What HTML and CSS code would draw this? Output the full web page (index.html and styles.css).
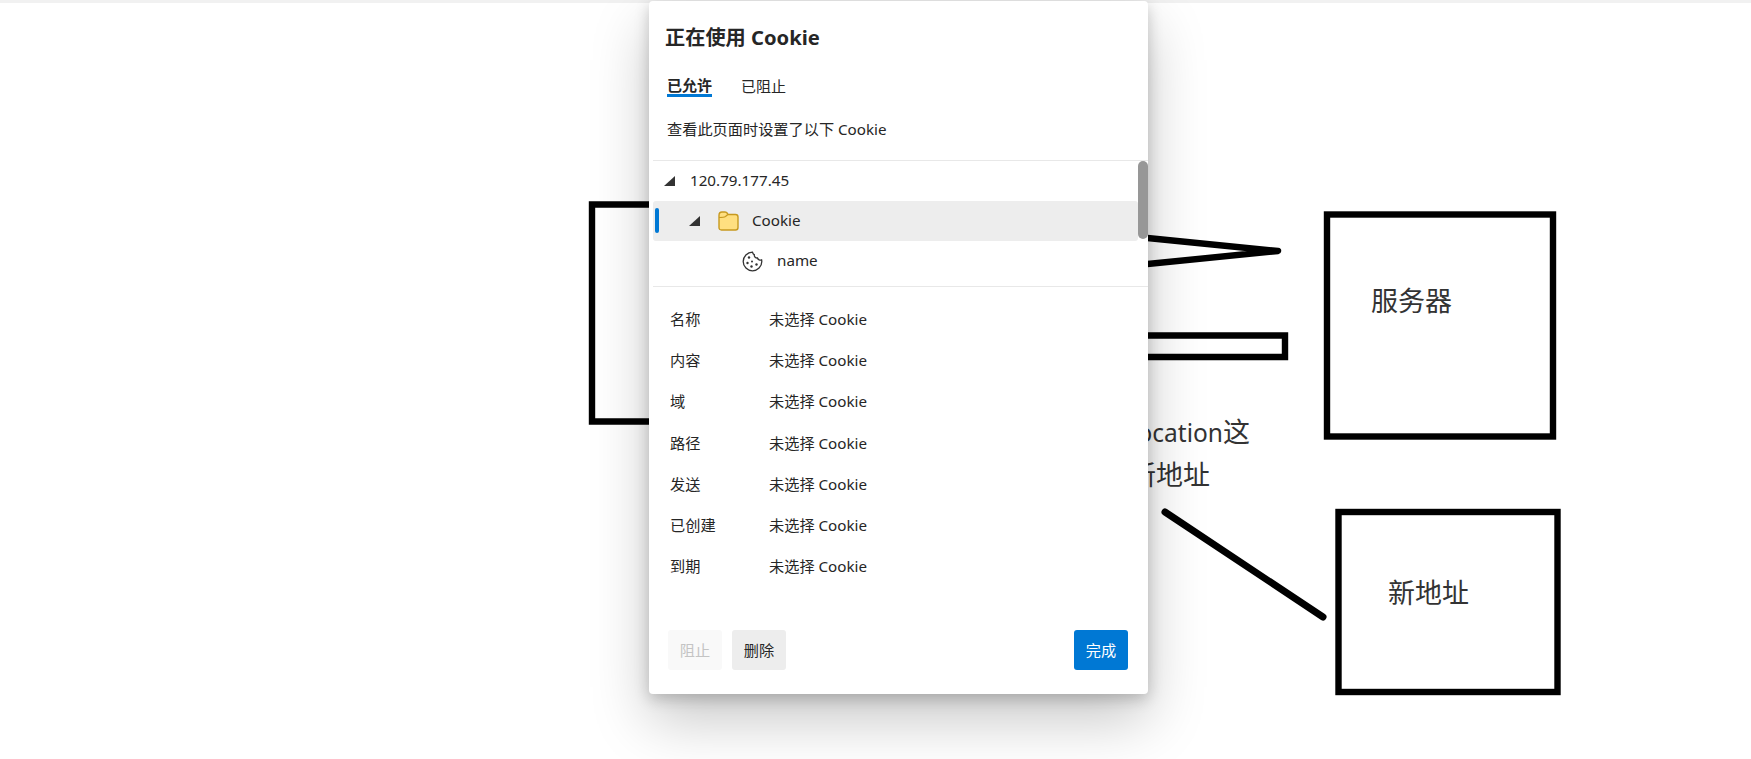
FILE: index.html
```html
<!DOCTYPE html>
<html lang="zh-CN">
<head>
<meta charset="utf-8">
<title>正在使用 Cookie</title>
<link rel="stylesheet" href="styles.css">
</head>
<body>
<div class="topbar"></div>
<svg class="drawing" width="1751" height="759" viewBox="0 0 1751 759">
  <g class="strokes">
    <path d="M880 204.500H592V421.500H880"/>
    <path class="taper" d="M1120 235.200L1278 251L1120 266.800"/>
    <path d="M1000 335.500H1285V357H1000"/>
    <rect x="1327" y="214.500" width="226" height="222"/>
    <rect x="1338.500" y="512" width="219" height="180"/>
    <path class="round" d="M1165 512L1323 617"/>
  </g>
  <g class="words">
    <text x="1371" y="311">服务器</text>
    <text x="1388" y="603">新地址</text>
    <text x="1250" y="442" text-anchor="end"><tspan class="latin">Location</tspan>这</text>
    <text x="1210" y="485" text-anchor="end">告诉新地址</text>
  </g>
</svg>
<section class="dialog">
  <h1 class="title">正在使用 Cookie</h1>
  <div class="tabs">
    <span class="tab active">已允许</span>
    <span class="tab">已阻止</span>
  </div>
  <p class="desc">查看此页面时设置了以下 Cookie</p>
  <div class="tree">
    <div class="row">
      <svg class="arrow" width="11" height="11" viewBox="0 0 11 11"><path d="M11 0V10H0Z"/></svg>
      <span class="host">120.79.177.45</span>
    </div>
    <div class="row selected">
      <svg class="arrow" width="11" height="11" viewBox="0 0 11 11"><path d="M11 0V10H0Z"/></svg>
      <svg class="folder" width="21" height="20" viewBox="0 0 21 20"><path class="folder-body" d="M1 4.500Q1 1 4 1H7Q8.500 1 9.500 2.500L10 3.500H17.500Q20 3.500 20 6V16.500Q20 19 17.500 19H3.500Q1 19 1 16.500Z"/><path class="folder-tab" d="M1 6.500Q6 6.500 7.500 5.500L9.800 3.500"/></svg>
      <span class="folder-label">Cookie</span>
    </div>
    <div class="row">
      <svg class="cookie" width="21" height="21" viewBox="0 0 21 21">
        <path class="cookie-line" d="M10.500 1.200C5.300 1.200 1.200 5.400 1.200 10.500S5.400 19.800 10.500 19.800 19.800 15.600 19.800 10.500C19.800 9.900 19.700 9.300 19.600 8.800 18 9.500 16 8.800 15.500 7 13.700 7.200 12 5.700 12.300 3.700 11.300 3.400 10.900 2.500 10.500 1.200Z"/>
        <circle cx="7" cy="6.500" r="1.200"/><circle cx="5.500" cy="12" r="1.200"/><circle cx="10" cy="10.500" r="1"/><circle cx="9.500" cy="15.500" r="1.200"/><circle cx="14.500" cy="13.500" r="1.200"/>
      </svg>
      <span class="cookie-label">name</span>
    </div>
    <div class="scroll-thumb"></div>
  </div>
  <dl class="details">
    <dt>名称</dt><dd>未选择 Cookie</dd>
    <dt>内容</dt><dd>未选择 Cookie</dd>
    <dt>域</dt><dd>未选择 Cookie</dd>
    <dt>路径</dt><dd>未选择 Cookie</dd>
    <dt>发送</dt><dd>未选择 Cookie</dd>
    <dt>已创建</dt><dd>未选择 Cookie</dd>
    <dt>到期</dt><dd>未选择 Cookie</dd>
  </dl>
  <div class="actions">
    <button class="btn disabled" type="button">阻止</button>
    <button class="btn" type="button">删除</button>
    <button class="btn primary" type="button">完成</button>
  </div>
</section>
</body>
</html>
```
FILE: styles.css
```css
* { box-sizing: border-box; }
html, body { margin: 0; height: 100%; }
body {
  position: relative;
  width: 1751px;
  height: 759px;
  overflow: hidden;
  background: #fff;
  color: #262626;
  font-family: "Noto Sans", "Noto Sans CJK SC", sans-serif;
  font-size: 15.200px;
}
.topbar { height: 3px; background: #f1f1f1; }
.drawing { position: absolute; left: 0; top: 0; }
.strokes { fill: none; stroke: #000; stroke-width: 6.400; stroke-linejoin: miter; }
.taper { stroke-width: 6.500; stroke-linejoin: round; stroke-linecap: round; }
.round { stroke-width: 7; stroke-linecap: round; }
.words { fill: #333; font-family: "Noto Sans", "Noto Sans CJK SC", sans-serif; font-size: 27px; }
.latin { font-size: 24.500px; }

.dialog {
  position: absolute;
  left: 649px;
  top: 1px;
  width: 499px;
  height: 693px;
  display: flex;
  flex-direction: column;
  background: #fff;
  border-radius: 4px;
  box-shadow: 0 26px 58px rgba(0,0,0,.22), 0 5px 15px rgba(0,0,0,.2);
}
.title {
  margin: 21px 0 0 16px;
  height: 30px;
  font-size: 20.200px;
  line-height: 30px;
  font-weight: 700;
}
.tabs { display: flex; gap: 29px; margin: 21px 0 0 18px; font-size: 15px; }
.tab { height: 24px; line-height: 26px; }
.tab.active { line-height: 24px; font-weight: 700; border-bottom: 3px solid #0078d4; }
.desc { margin: 20px 0 0 18px; height: 24px; line-height: 24px; }
.tree {
  position: relative;
  margin: 19px 0 0 4px;
  padding-bottom: 5px;
  border-top: 1px solid #e8e8e8;
  border-bottom: 1px solid #e8e8e8;
}
.row {
  position: relative;
  display: flex;
  align-items: center;
  height: 40px;
  margin-right: 10px;
  padding-left: 11px;
}
.row span { padding-bottom: 2px; }
.arrow { fill: #333; flex: none; }
.host { margin-left: 15px; }
.selected { background: #ededed; border-radius: 3px; padding-left: 36px; }
.selected::before {
  content: "";
  position: absolute;
  left: 2px;
  top: 7px;
  width: 4px;
  height: 25px;
  border-radius: 2px;
  background: #0078d4;
}
.folder { margin-left: 18px; flex: none; }
.folder-body { fill: #ffdf80; stroke: #c7991f; stroke-width: 1.400; }
.folder-tab { fill: none; stroke: #c7991f; stroke-width: 1.200; }
.folder-label { margin-left: 13px; }
.cookie { margin-left: 78px; flex: none; fill: #333; }
.cookie-line { fill: none; stroke: #333; stroke-width: 1.300; }
.cookie-label { margin-left: 14px; }
.scroll-thumb {
  position: absolute;
  right: 0;
  top: 0;
  width: 10px;
  height: 78px;
  border-radius: 5px;
  background: #979797;
}
.details {
  display: grid;
  grid-template-columns: 99px 1fr;
  grid-auto-rows: 41.300px;
  align-items: center;
  margin: 11px 0 0 21px;
  line-height: 24px;
}
.details dt, .details dd { margin: 0; }
.actions {
  display: flex;
  gap: 10px;
  margin-top: auto;
  padding: 0 20px 24px 19px;
}
.btn {
  width: 54px;
  height: 40px;
  padding: 0 0 2px;
  border: 0;
  border-radius: 3px;
  background: #ededed;
  color: #262626;
  font: inherit;
}
.btn.disabled { background: #f9f9f9; color: #c4c4c4; }
.btn.primary { margin-left: auto; background: #0078d4; color: #fff; }
```
